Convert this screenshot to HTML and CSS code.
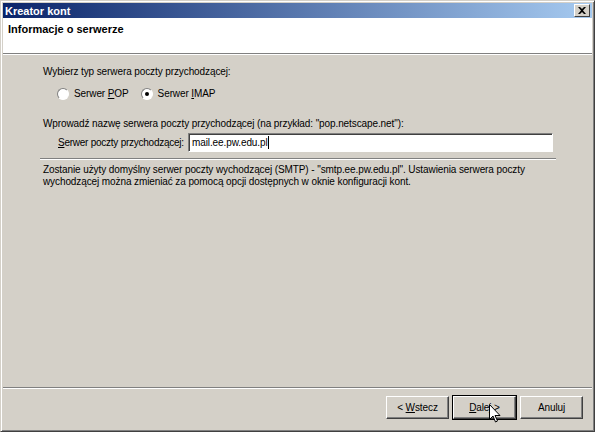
FILE: index.html
```html
<!DOCTYPE html>
<html>
<head>
  <title>Kreator kont</title>
  <link rel="stylesheet" href="styles.css">
</head>
<body>
  <div class="window">
    <div class="titlebar">
      <span class="title">Kreator kont</span>
      <span class="close">
        <svg width="8" height="7" viewBox="0 0 8 7"><path d="M0 0h2l2 2 2-2h2L5 3.5 8 7H6L4 5 2 7H0l3-3.5z" fill="#000"/></svg>
      </span>
    </div>
    <div class="header">Informacje o serwerze</div>

    <div class="content">
      <p class="line">Wybierz typ serwera poczty przychodzącej:</p>
      <div class="radios">
        <label class="radio"><span class="dot"></span><span>Serwer <u>P</u>OP</span></label>
        <label class="radio"><span class="dot checked"></span><span>Serwer <u>I</u>MAP</span></label>
      </div>

      <p class="line second">Wprowadź nazwę serwera poczty przychodzącej (na przykład: "pop.netscape.net"):</p>
      <div class="field">
        <label class="field-label"><u>S</u>erwer poczty przychodzącej:</label>
        <div class="input">mail.ee.pw.edu.pl<span class="caret"></span></div>
      </div>

      <div class="sep"></div>

      <p class="note">Zostanie użyty domyślny serwer poczty wychodzącej (SMTP) - "smtp.ee.pw.edu.pl". Ustawienia serwera poczty<br>wychodzącej można zmieniać za pomocą opcji dostępnych w oknie konfiguracji kont.</p>
    </div>

    <div class="footer">
      <button class="btn">&lt; <u>W</u>stecz</button>
      <button class="btn focused"><u>D</u>alej &gt;
        <svg class="cursor" width="12" height="19" viewBox="0 0 12 19"><path d="M0.5 0.5v15l3.5-3.5 2.5 6 2-1-2.5-5.5h5z" fill="#fff" stroke="#000"/></svg>
      </button>
      <button class="btn">Anuluj</button>
    </div>
  </div>
</body>
</html>
```

FILE: styles.css
```css
body {
  margin: 0;
  font-family: "Liberation Sans", Arial, sans-serif;
  font-size: 10px;
  letter-spacing: -0.1px;
  color: #000;
  background: #d4d0c8;
}

.window {
  width: 595px;
  height: 432px;
  box-sizing: border-box;
  display: flex;
  flex-direction: column;
  background: #d4d0c8;
  border-top: 1px solid #d4d0c8;
  border-left: 1px solid #d4d0c8;
  border-right: 1px solid #404040;
  border-bottom: 1px solid #404040;
  box-shadow: inset 1px 1px 0 #fff, inset -1px -1px 0 #808080;
  padding: 2px;
}

.titlebar {
  height: 15px;
  display: flex;
  align-items: center;
  justify-content: space-between;
  padding: 0 2px 0 2px;
  background: linear-gradient(to right, #0a246a, #a6caf0);
  color: #fff;
}

.title {
  font-weight: bold;
  font-size: 11px;
  letter-spacing: 0;
}

.close {
  width: 16px;
  height: 13px;
  box-sizing: border-box;
  display: flex;
  align-items: center;
  justify-content: center;
  background: #d4d0c8;
  border-top: 1px solid #fff;
  border-left: 1px solid #fff;
  border-right: 1px solid #404040;
  border-bottom: 1px solid #404040;
}

.header {
  height: 36px;
  box-sizing: border-box;
  padding: 5px 0 0 5px;
  background: #fff;
  font-weight: bold;
  font-size: 11px;
  letter-spacing: 0;
  border-bottom: 1px solid #808080;
  box-shadow: 0 1px 0 #fff;
}

.content {
  flex: 1;
  padding: 12px 39px 0 40px;
}

.line {
  margin: 0;
  height: 13px;
}

.second {
  margin-top: 18px;
}

.radios {
  display: flex;
  gap: 12px;
  margin: 8px 0 0 14px;
  height: 13px;
  align-items: center;
}

.radio {
  display: flex;
  align-items: center;
  gap: 5px;
}

.dot {
  width: 12px;
  height: 12px;
  box-sizing: border-box;
  border-radius: 50%;
  background: #fff;
  border: 1px solid;
  border-color: #808080 #fff #fff #808080;
  box-shadow: 0 0 0 0.5px #d4d0c8;
  display: flex;
  align-items: center;
  justify-content: center;
}

.dot.checked::after {
  content: "";
  width: 4px;
  height: 4px;
  border-radius: 50%;
  background: #000;
}

.field {
  display: flex;
  align-items: center;
  margin: 2px 0 0 15px;
}

.field-label {
  width: 130px;
  white-space: nowrap;
  letter-spacing: -0.25px;
}

.input {
  flex: 1;
  height: 19px;
  box-sizing: border-box;
  padding: 2px 3px;
  background: #fff;
  border-top: 1px solid #808080;
  border-left: 1px solid #808080;
  border-right: 1px solid #fff;
  border-bottom: 1px solid #fff;
  box-shadow: inset 1px 1px 0 #404040;
  display: flex;
  align-items: center;
}

.caret {
  width: 1px;
  height: 13px;
  background: #000;
}

.sep {
  margin: 6px -3px 0 -3px;
  border-top: 1px solid #808080;
  border-bottom: 1px solid #fff;
}

.note {
  margin: 4px 0 0 0;
  line-height: 12px;
}

.footer {
  display: flex;
  justify-content: flex-end;
  gap: 4px;
  padding: 8px 9px 10px 0;
  border-top: 1px solid #808080;
  box-shadow: inset 0 1px 0 #fff;
}

.btn {
  position: relative;
  width: 63px;
  height: 23px;
  font-family: "Liberation Sans", Arial, sans-serif;
  font-size: 10px;
  letter-spacing: -0.1px;
  color: #000;
  background: #d4d0c8;
  border-top: 1px solid #fff;
  border-left: 1px solid #fff;
  border-right: 1px solid #404040;
  border-bottom: 1px solid #404040;
  box-shadow: inset -1px -1px 0 #808080;
  padding: 0;
}

.btn.focused {
  outline: 1px solid #000;
}

.cursor {
  position: absolute;
  left: 35px;
  top: 7px;
}
```
